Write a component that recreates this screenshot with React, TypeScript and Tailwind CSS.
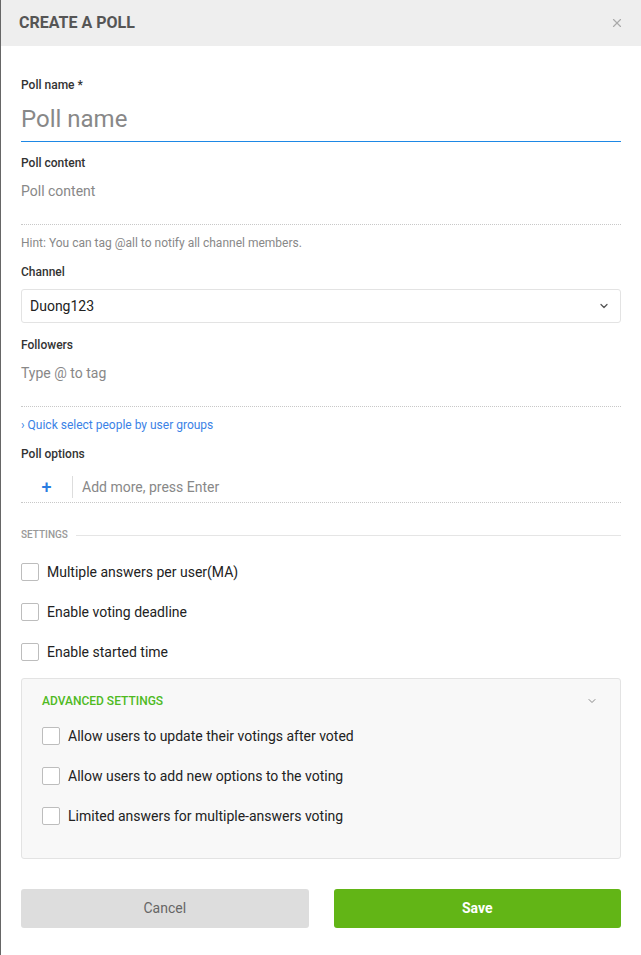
import { ChevronDown, X } from "lucide-react";

const label = "block text-[12px] font-medium leading-none text-[#333]";

function Checkbox({ text }: { text: string }) {
  return (
    <label className="flex h-[18px] items-center gap-[8px]">
      <span className="h-[18px] w-[18px] shrink-0 rounded-[2px] border border-[#bdbdbd] bg-white" />
      <span className="text-[14px] leading-none text-[#222]">{text}</span>
    </label>
  );
}

export default function App() {
  return (
    <div className="min-h-[955px] w-[641px] border-l border-[#666] bg-white font-['Roboto',sans-serif]">
      <div className="flex h-[46px] items-center justify-between bg-[#eeeeee] pl-[18px] pr-[17px]">
        <h2 className="text-[16px] font-bold text-[#555]">CREATE A POLL</h2>
        <X className="h-[14px] w-[14px] text-[#aaa]" strokeWidth={2} />
      </div>

      <div className="px-[20px]">
        <div className="pt-[33px]">
          <span className={label}>Poll name *</span>
          <div className="mt-[14px] pb-[8px] text-[24px] leading-[28px] text-[#888]">Poll name</div>
          <div className="h-px bg-[#1e88e5]" />
        </div>

        <div className="pt-[15px]">
          <span className={label}>Poll content</span>
          <div className="mt-[15px] h-[41px] border-b border-dotted border-[#c8c8c8] text-[14px] leading-none text-[#888]">
            Poll content
          </div>
          <p className="mt-[12px] text-[12px] leading-none text-[#888]">Hint: You can tag @all to notify all channel members.</p>
        </div>

        <div className="pt-[17px]">
          <span className={label}>Channel</span>
          <div className="mt-[11px] flex h-[34px] items-center justify-between rounded-[3px] border border-[#e3e3e3] pl-[8px] pr-[10px]">
            <span className="text-[14px] text-[#222]">Duong123</span>
            <ChevronDown className="h-[12px] w-[12px] text-[#555]" strokeWidth={2.5} />
          </div>
        </div>

        <div className="pt-[16px]">
          <span className={label}>Followers</span>
          <div className="mt-[15px] h-[41px] border-b border-dotted border-[#c8c8c8] text-[14px] leading-none text-[#888]">
            Type @ to tag
          </div>
          <p className="mt-[12px] text-[12px] leading-none text-[#3b82e6]">› Quick select people by user groups</p>
        </div>

        <div className="pt-[17px]">
          <span className={label}>Poll options</span>
          <div className="mt-[15px] flex h-[28px] items-center border-b border-dotted border-[#c8c8c8] pb-[4px]">
            <span className="w-[51px] text-center text-[18px] font-medium leading-none text-[#2a7de1]">+</span>
            <span className="h-[22px] w-px bg-[#ddd]" />
            <span className="pl-[9px] text-[14px] leading-none text-[#888]">Add more, press Enter</span>
          </div>
        </div>

        <div className="mt-[27px] flex items-center gap-[8px]">
          <span className="text-[10px] font-medium leading-none text-[#999]">SETTINGS</span>
          <span className="h-px flex-1 bg-[#e5e5e5]" />
        </div>

        <div className="mt-[23px] flex flex-col gap-[22px]">
          <Checkbox text="Multiple answers per user(MA)" />
          <Checkbox text="Enable voting deadline" />
          <Checkbox text="Enable started time" />
        </div>

        <div className="mt-[17px] h-[181px] rounded-[3px] border border-[#e3e3e3] bg-[#f8f8f8] px-[20px] pt-[16px]">
          <div className="flex items-center justify-between pr-[2px]">
            <span className="text-[12px] font-medium leading-none text-[#4fba1f]">ADVANCED SETTINGS</span>
            <ChevronDown className="h-[12px] w-[12px] text-[#888]" strokeWidth={2} />
          </div>
          <div className="mt-[20px] flex flex-col gap-[22px]">
            <Checkbox text="Allow users to update their votings after voted" />
            <Checkbox text="Allow users to add new options to the voting" />
            <Checkbox text="Limited answers for multiple-answers voting" />
          </div>
        </div>

        <div className="mt-[30px] grid grid-cols-2 gap-[25px]">
          <button className="h-[39px] rounded-[3px] bg-[#dddddd] text-[14px] text-[#666]">Cancel</button>
          <button className="h-[39px] rounded-[3px] bg-[#62b516] text-[14px] font-bold text-white">Save</button>
        </div>
      </div>
    </div>
  );
}
